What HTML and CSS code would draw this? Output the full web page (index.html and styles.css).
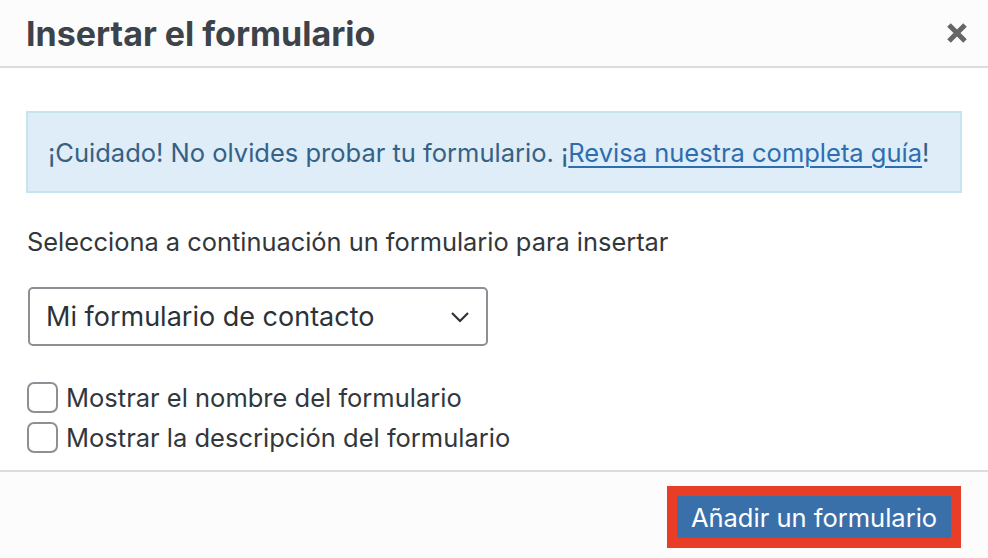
FILE: index.html
```html
<!DOCTYPE html>
<html lang="es">
<head>
<meta charset="UTF-8">
<meta name="viewport" content="width=device-width, initial-scale=1.0">
<title>Insertar el formulario</title>
<link rel="stylesheet" href="styles.css">
</head>
<body>
<div class="modal">
  <div class="modal-header">
    <h1>Insertar el formulario</h1>
    <button class="close" type="button" aria-label="Cerrar">
      <svg width="22" height="22" viewBox="0 0 22 22"><path d="M3 3L19 19M19 3L3 19" stroke="#666" stroke-width="5" stroke-linecap="butt"/></svg>
    </button>
  </div>

  <div class="modal-body">
    <div class="notice">
      ¡Cuidado! No olvides probar tu formulario. ¡<a href="#">Revisa nuestra completa guía</a>!
    </div>

    <p class="intro">Selecciona a continuación un formulario para insertar</p>

    <div class="select-wrap">
      <select class="form-select">
        <option>Mi formulario de contacto</option>
      </select>
      <svg class="chevron" width="20" height="12" viewBox="0 0 20 12"><path d="M2 2L10 10L18 2" fill="none" stroke="#2c3338" stroke-width="2.2"/></svg>
    </div>

    <label class="check"><input type="checkbox"><span class="box"></span>Mostrar el nombre del formulario</label>
    <label class="check"><input type="checkbox"><span class="box"></span>Mostrar la descripción del formulario</label>
  </div>

  <div class="modal-footer">
    <div class="highlight">
      <button class="primary" type="button">Añadir un formulario</button>
    </div>
  </div>
</div>
</body>
</html>
```

FILE: styles.css
```css
* {
  box-sizing: border-box;
}

body {
  margin: 0;
  font-family: Inter, "Noto Sans", Arial, sans-serif;
  background: #fff;
  color: #2c3338;
}

.modal {
  width: 988px;
  height: 558px;
  display: flex;
  flex-direction: column;
}

.modal-header {
  height: 68px;
  background: #fcfcfc;
  border-bottom: 2px solid #dcdcde;
  display: flex;
  align-items: center;
  justify-content: space-between;
  padding: 0 20px 0 26px;
}

.modal-header h1 {
  margin: 0;
  font-size: 34px;
  font-weight: 700;
  color: #3c434a;
}

.close {
  background: none;
  border: none;
  padding: 0;
  width: 22px;
  height: 22px;
  cursor: pointer;
}

.modal-body {
  flex: 1;
  padding: 43px 26px 0 26px;
}

.notice {
  background: #deedf7;
  border: 2px solid #c5e6ef;
  height: 82px;
  display: flex;
  align-items: center;
  padding: 0 20px;
  font-size: 25.5px;
  color: #356184;
}

.notice a {
  color: #2d6db0;
  text-decoration: underline;
  text-underline-offset: 4px;
  text-decoration-thickness: 1.5px;
}

.intro {
  margin: 34px 0 0 1px;
  font-size: 25.4px;
  color: #32373c;
  line-height: 30px;
}

.select-wrap {
  position: relative;
  width: 460px;
  margin: 30px 0 0 2px;
}

.form-select {
  appearance: none;
  -webkit-appearance: none;
  width: 100%;
  height: 59px;
  border: 2px solid #8c8f94;
  border-radius: 5px;
  background: #fff;
  padding: 0 16px;
  font-family: inherit;
  font-size: 27px;
  color: #2c3338;
}

.chevron {
  position: absolute;
  right: 18px;
  top: 24px;
  pointer-events: none;
}

.check {
  display: flex;
  align-items: center;
  height: 40px;
  font-size: 25.5px;
  color: #32373c;
  margin-left: 1px;
}

.select-wrap + .check {
  margin-top: 31px;
}

.check input {
  display: none;
}

.check .box {
  width: 31px;
  height: 31px;
  border: 2px solid #8c8f94;
  border-radius: 7px;
  background: #fff;
  margin-right: 8px;
}

.modal-footer {
  height: 88px;
  background: #fcfcfc;
  border-top: 2px solid #dcdcde;
  display: flex;
  justify-content: flex-end;
  align-items: flex-start;
  padding: 14px 27px 0 0;
}

.highlight {
  border: 10px solid #e83e27;
}

.primary {
  display: block;
  width: 274px;
  height: 42px;
  background: #3a70aa;
  border: none;
  color: #fff;
  font-family: inherit;
  font-size: 25.5px;
  padding: 0;
  cursor: pointer;
}
```
